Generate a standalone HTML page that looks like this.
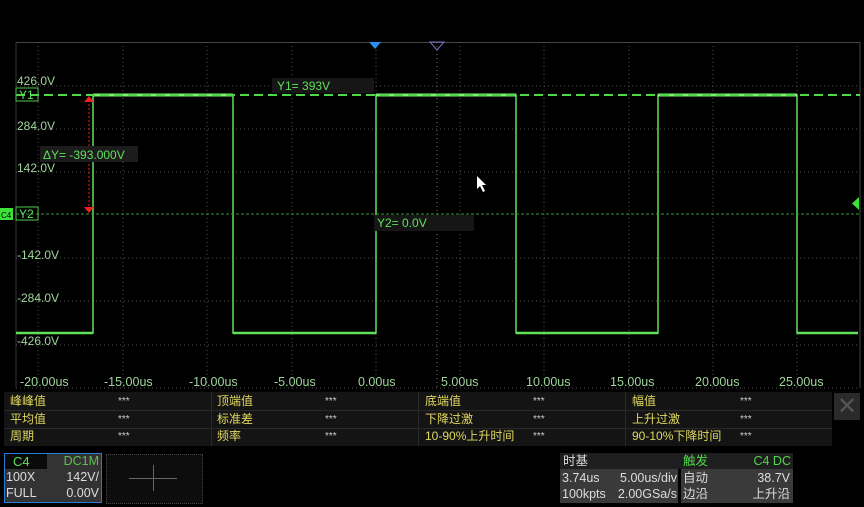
<!DOCTYPE html>
<html><head><meta charset="utf-8"><style>
body{margin:0;width:864px;height:507px;background:#000;overflow:hidden;font-family:"Liberation Sans","Noto Sans CJK SC",sans-serif;position:relative}
.a{position:absolute}
.m{position:absolute;left:4px;top:392px;width:828px;height:54px;background:#141414}
.row{position:absolute;height:17px;font-size:12px;color:#e0d860;line-height:17px}
.st{color:#ccc;font-size:10px}
</style></head><body>
<svg class="a" style="left:0;top:0" width="864" height="392">
<rect x="16" y="42" width="844" height="1" fill="#444"/>
<line x1="16" y1="42" x2="16" y2="388" stroke="#333"/>
<line x1="860" y1="42" x2="860" y2="388" stroke="#444"/>
<g stroke="#555" stroke-dasharray="1 3">
<line x1="38" y1="42" x2="38" y2="388"/><line x1="123" y1="42" x2="123" y2="388"/><line x1="207" y1="42" x2="207" y2="388"/><line x1="292" y1="42" x2="292" y2="388"/><line x1="376" y1="42" x2="376" y2="388"/><line x1="460" y1="42" x2="460" y2="388"/><line x1="544" y1="42" x2="544" y2="388"/><line x1="629" y1="42" x2="629" y2="388"/><line x1="713" y1="42" x2="713" y2="388"/><line x1="797" y1="42" x2="797" y2="388"/>
<line x1="16" y1="86" x2="860" y2="86"/><line x1="16" y1="129" x2="860" y2="129"/><line x1="16" y1="172" x2="860" y2="172"/><line x1="16" y1="258" x2="860" y2="258"/><line x1="16" y1="301" x2="860" y2="301"/><line x1="16" y1="345" x2="860" y2="345"/>
<line x1="16" y1="388" x2="860" y2="388"/>
<line x1="437" y1="42" x2="437" y2="388" stroke="#777"/>
</g>
<path d="M16 333H93V95H233V333H376V95H516V333H658V95H797V333H858" fill="none" stroke="#5fe05a" stroke-width="1.5"/>
<path d="M93 95H233M376 95H516M658 95H797" stroke="#7ff070" stroke-width="3"/>
<path d="M16 333H93M233 333H376M516 333H658M797 333H858" stroke="#5fe05a" stroke-width="2.5"/>
<line x1="16" y1="95" x2="860" y2="95" stroke="#4ed84a" stroke-width="2" stroke-dasharray="9 5"/>
<line x1="16" y1="214" x2="860" y2="214" stroke="#3a9a38" stroke-width="1" stroke-dasharray="3 2"/>
<line x1="89" y1="100" x2="89" y2="208" stroke="#e02020" stroke-dasharray="2 2"/>
<path d="M84 102L89 96L94 102Z M84 207L89 213L94 207Z" fill="#f02020"/>
<path d="M369 42H381L375 49Z" fill="#2a8ef0"/>
<path d="M430 42H444L437 50Z" fill="none" stroke="#8070c0"/>
<path d="M859 197V210L852 203.5Z" fill="#3ee03a"/>
<rect x="16" y="88" width="22" height="13" fill="none" stroke="#4ec84a"/>
<rect x="16" y="207" width="22" height="13" fill="none" stroke="#4ec84a"/>
<rect x="0" y="208" width="13" height="12" fill="#3ee03a"/>
<rect x="272" y="78" width="102" height="15" fill="#161616"/>
<rect x="40" y="146" width="98" height="16" fill="#1c1c1c"/>
<rect x="374" y="215" width="100" height="16" fill="#161616"/>
<path d="M477 176V189L480 186L483 192L485 191L482 185L486 185Z" fill="#fff"/>
<g font-family="Liberation Sans" font-size="12" fill="#9fd49a">
<text x="17" y="85">426.0V</text><text x="17" y="130">284.0V</text><text x="17" y="172">142.0V</text>
<text x="17" y="259">-142.0V</text><text x="17" y="302">-284.0V</text><text x="17" y="345">-426.0V</text>
<text x="19" y="99" fill="#5fe05a">Y1</text><text x="19" y="218" fill="#5fe05a">Y2</text>
<text x="1" y="218" font-size="8" fill="#000">C4</text>
<text x="277" y="90" fill="#5fe05a">Y1= 393V</text>
<text x="43" y="159" fill="#5fe05a">ΔY= -393.000V</text>
<text x="377" y="227" fill="#5fe05a">Y2= 0.0V</text>
<g font-size="12.5"><text x="20" y="386">-20.00us</text><text x="104" y="386">-15.00us</text><text x="189" y="386">-10.00us</text><text x="274" y="386">-5.00us</text><text x="358" y="386">0.00us</text><text x="441" y="386">5.00us</text><text x="526" y="386">10.00us</text><text x="610" y="386">15.00us</text><text x="695" y="386">20.00us</text><text x="779" y="386">25.00us</text></g>
</g>
</svg>
<div class="m">
<div class="a" style="left:0;top:18px;width:828px;height:1px;background:#2a2a2a"></div>
<div class="a" style="left:0;top:36px;width:828px;height:1px;background:#2a2a2a"></div>
<div class="a" style="left:207px;top:0;width:1px;height:54px;background:#2a2a2a"></div>
<div class="a" style="left:414px;top:0;width:1px;height:54px;background:#2a2a2a"></div>
<div class="a" style="left:621px;top:0;width:1px;height:54px;background:#2a2a2a"></div>
</div>
<div class="a" style="left:834px;top:393px;width:26px;height:27px;background:#2a2a2a;color:#555;font-size:24px;line-height:27px;text-align:center">✕</div>
<div class="row" style="left:10px;top:393px">峰峰值</div><div class="row st" style="left:118px;top:393px">***</div>
<div class="row" style="left:217px;top:393px">顶端值</div><div class="row st" style="left:325px;top:393px">***</div>
<div class="row" style="left:425px;top:393px">底端值</div><div class="row st" style="left:533px;top:393px">***</div>
<div class="row" style="left:632px;top:393px">幅值</div><div class="row st" style="left:740px;top:393px">***</div>
<div class="row" style="left:10px;top:411px">平均值</div><div class="row st" style="left:118px;top:411px">***</div>
<div class="row" style="left:217px;top:411px">标准差</div><div class="row st" style="left:325px;top:411px">***</div>
<div class="row" style="left:425px;top:411px">下降过激</div><div class="row st" style="left:533px;top:411px">***</div>
<div class="row" style="left:632px;top:411px">上升过激</div><div class="row st" style="left:740px;top:411px">***</div>
<div class="row" style="left:10px;top:428px">周期</div><div class="row st" style="left:118px;top:428px">***</div>
<div class="row" style="left:217px;top:428px">频率</div><div class="row st" style="left:325px;top:428px">***</div>
<div class="row" style="left:425px;top:428px">10-90%上升时间</div><div class="row st" style="left:533px;top:428px">***</div>
<div class="row" style="left:632px;top:428px">90-10%下降时间</div><div class="row st" style="left:740px;top:428px">***</div>

<div class="a" style="left:4px;top:453px;width:96px;height:48px;border:1.5px solid #2a7ad8;background:#333;font-size:12.5px;color:#ddd">
<div class="a" style="left:0;top:0;width:34px;height:15px;background:#0a0a0a;color:#5fe05a;padding-left:8px;font-size:13px;line-height:15px">C4</div>
<div class="a" style="right:2px;top:0;color:#5fc050;line-height:15px">DC1M</div>
<div class="a" style="left:1px;top:16px;line-height:15px">100X</div><div class="a" style="right:2px;top:16px;line-height:15px">142V/</div>
<div class="a" style="left:1px;top:32px;line-height:15px">FULL</div><div class="a" style="right:2px;top:32px;line-height:15px">0.00V</div>
</div>
<div class="a" style="left:106px;top:454px;width:95px;height:48px;border:1px dotted #444;background:#0d0d0d"></div>
<div class="a" style="left:129px;top:478px;width:48px;height:1px;background:#666"></div>
<div class="a" style="left:153px;top:465px;width:1px;height:26px;background:#666"></div>

<div class="a" style="left:560px;top:453px;width:118px;height:50px;background:#3a3a3a;font-size:12.5px;color:#ddd">
<div class="a" style="left:0;top:0;width:118px;height:16px;background:#1e1e1e;padding-left:3px;line-height:16px">时基</div>
<div class="a" style="left:2px;top:17px;line-height:16px">3.74us</div><div class="a" style="right:1px;top:17px;line-height:16px">5.00us/div</div>
<div class="a" style="left:2px;top:33px;line-height:16px">100kpts</div><div class="a" style="right:1px;top:33px;line-height:16px">2.00GSa/s</div>
</div>
<div class="a" style="left:681px;top:453px;width:112px;height:50px;background:#3a3a3a;font-size:12.5px;color:#ddd">
<div class="a" style="left:0;top:0;width:112px;height:16px;background:#1e1e1e;line-height:16px"><span style="color:#4ed84a;padding-left:2px">触发</span><span style="color:#4ed84a;position:absolute;right:2px">C4 DC</span></div>
<div class="a" style="left:2px;top:17px;line-height:16px">自动</div><div class="a" style="right:3px;top:17px;line-height:16px">38.7V</div>
<div class="a" style="left:2px;top:33px;line-height:16px">边沿</div><div class="a" style="right:3px;top:33px;line-height:16px">上升沿</div>
</div>
</body></html>
